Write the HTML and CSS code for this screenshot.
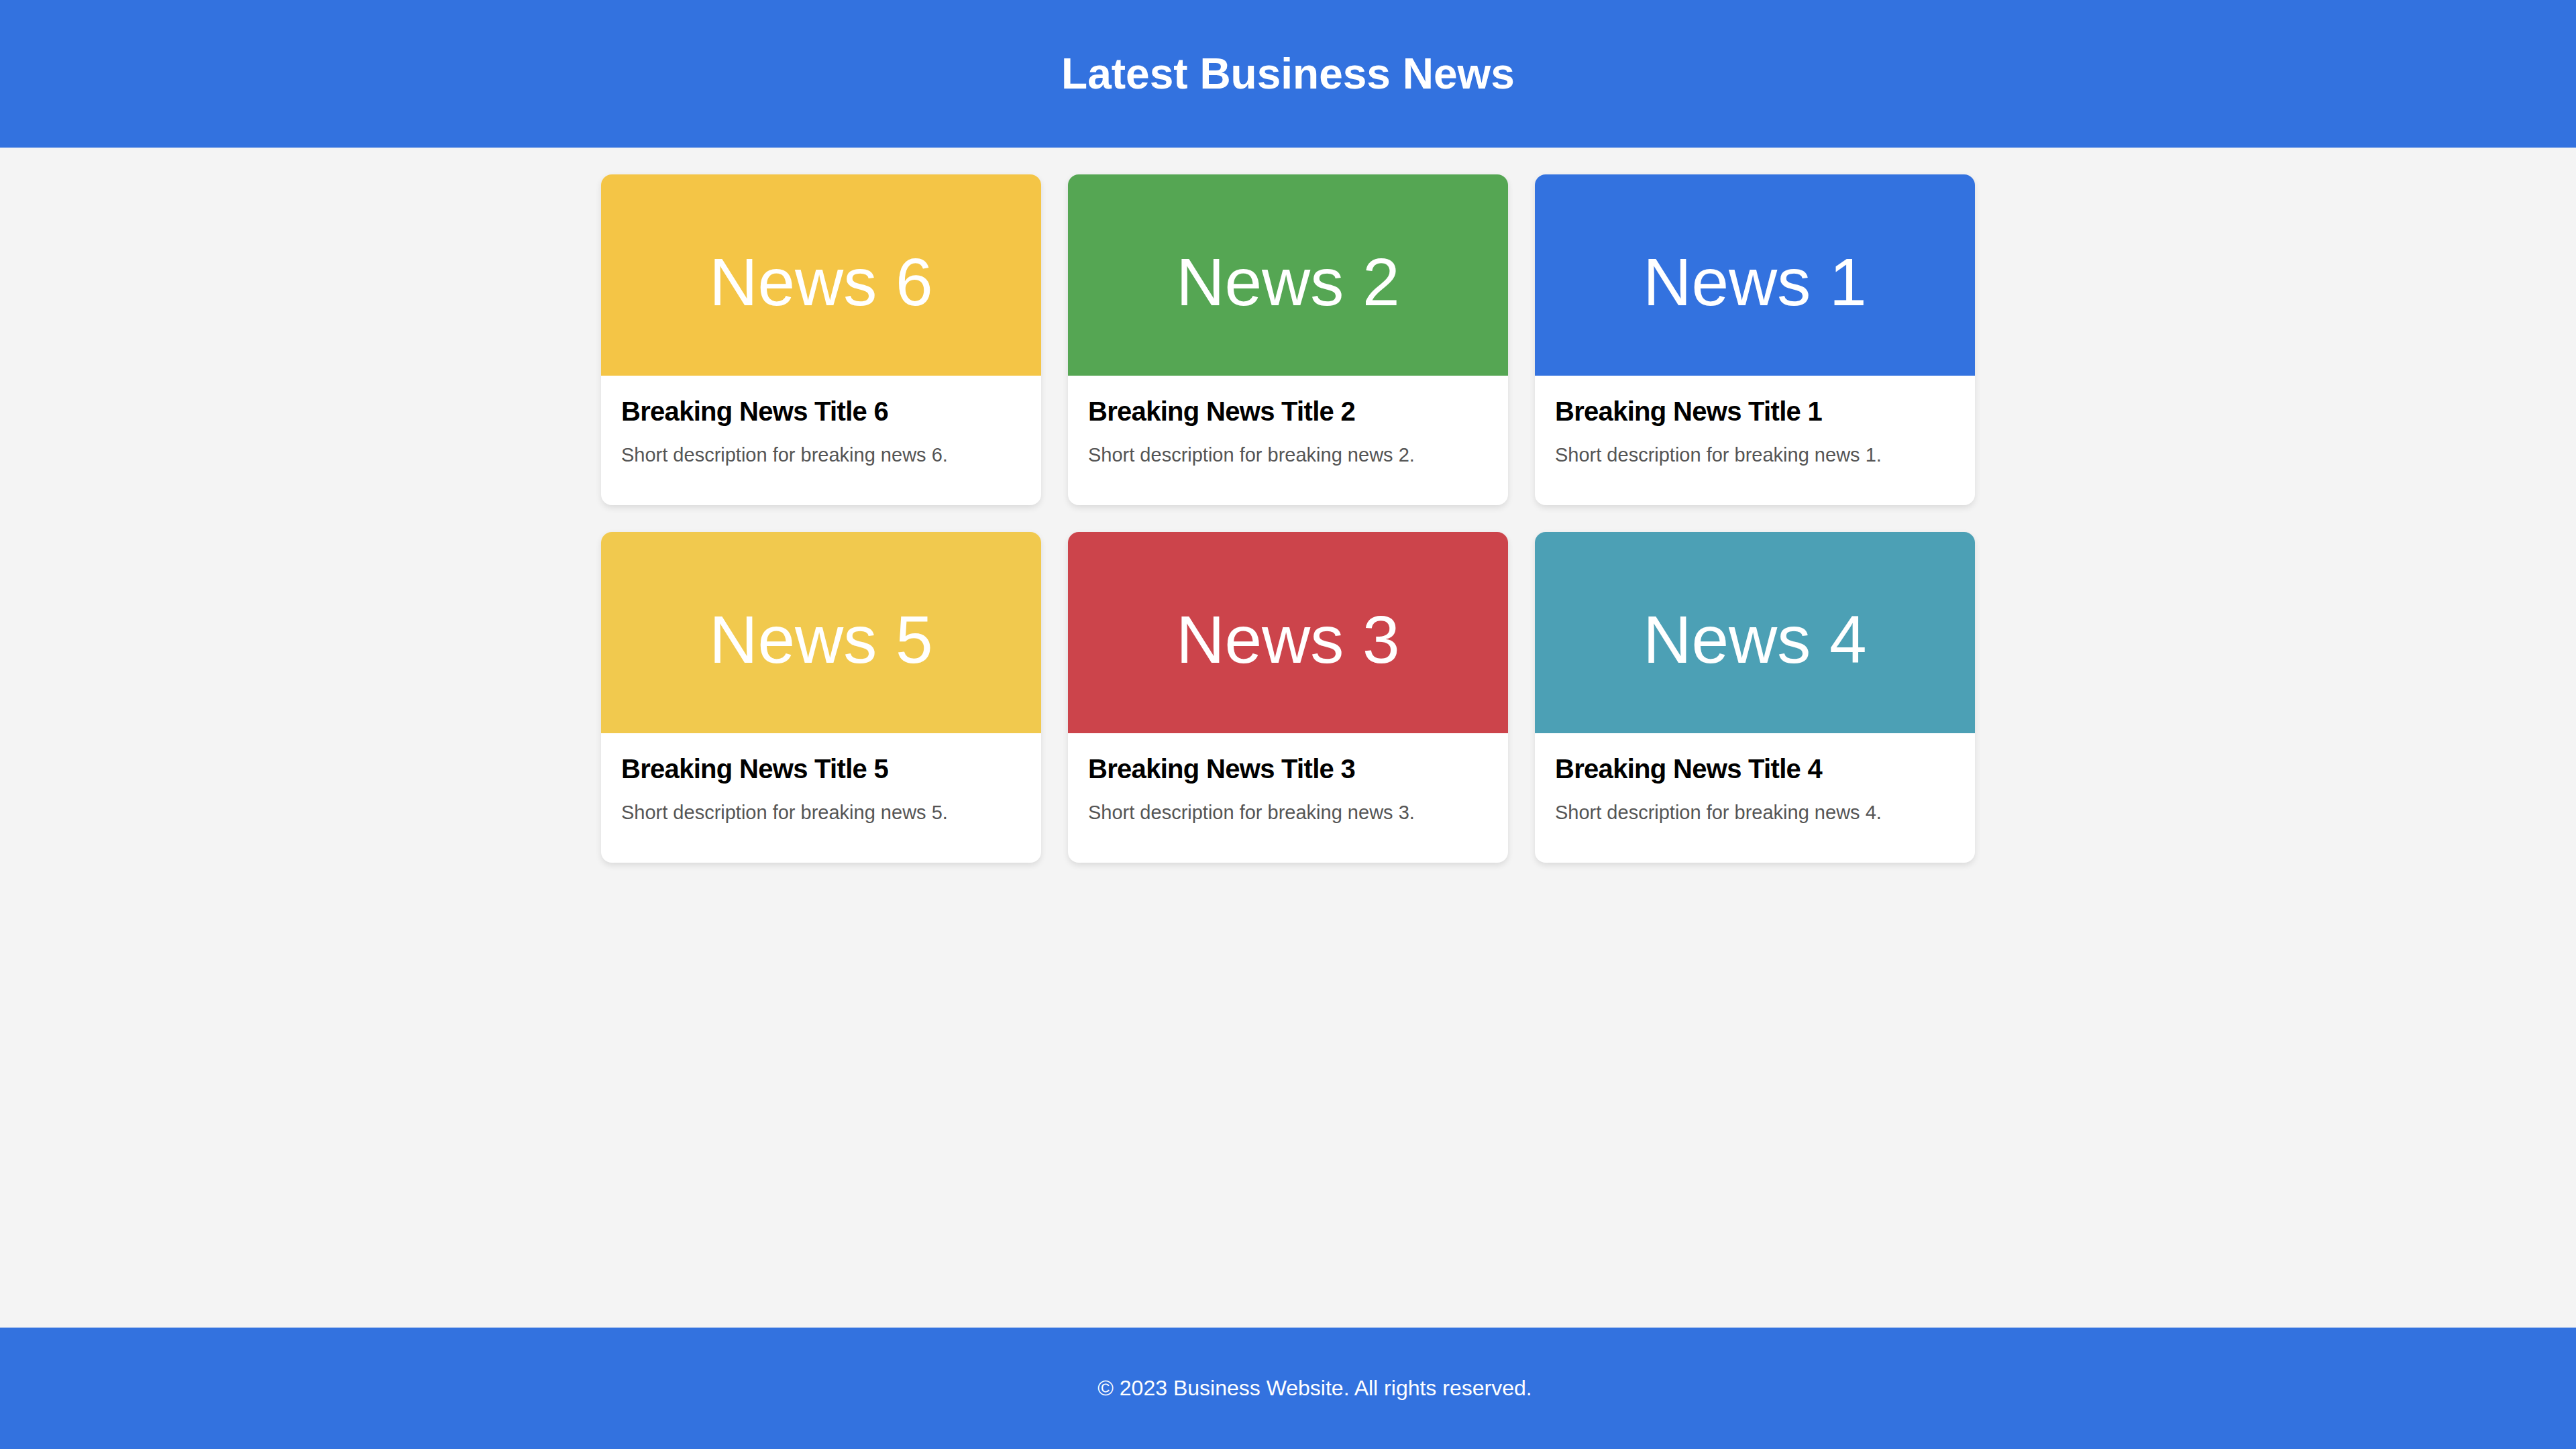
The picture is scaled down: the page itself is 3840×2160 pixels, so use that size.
FILE: index.html
```html
<!DOCTYPE html>
<html lang="en">
<head>
<meta charset="utf-8">
<title>Latest Business News</title>
<link rel="stylesheet" href="styles.css">
</head>
<body>
<div class="page">
  <header class="site-header">
    <h1>Latest Business News</h1>
  </header>
  <main class="news-grid">
    <article class="card">
      <div class="card-image yellow">News 6</div>
      <div class="card-body">
        <h3>Breaking News Title 6</h3>
        <p>Short description for breaking news 6.</p>
      </div>
    </article>
    <article class="card">
      <div class="card-image green">News 2</div>
      <div class="card-body">
        <h3>Breaking News Title 2</h3>
        <p>Short description for breaking news 2.</p>
      </div>
    </article>
    <article class="card">
      <div class="card-image blue">News 1</div>
      <div class="card-body">
        <h3>Breaking News Title 1</h3>
        <p>Short description for breaking news 1.</p>
      </div>
    </article>
    <article class="card">
      <div class="card-image gold">News 5</div>
      <div class="card-body">
        <h3>Breaking News Title 5</h3>
        <p>Short description for breaking news 5.</p>
      </div>
    </article>
    <article class="card">
      <div class="card-image red">News 3</div>
      <div class="card-body">
        <h3>Breaking News Title 3</h3>
        <p>Short description for breaking news 3.</p>
      </div>
    </article>
    <article class="card">
      <div class="card-image teal">News 4</div>
      <div class="card-body">
        <h3>Breaking News Title 4</h3>
        <p>Short description for breaking news 4.</p>
      </div>
    </article>
  </main>
  <footer class="site-footer">
    <p>&copy; 2023 Business Website. All rights reserved.</p>
  </footer>
</div>
</body>
</html>
```

FILE: styles.css
```css
html, body {
  margin: 0;
  padding: 0;
}

body {
  background: #f4f4f4;
  font-family: "Liberation Sans", Arial, sans-serif;
  color: #000;
}

.page {
  min-height: 100vh;
  display: flex;
  flex-direction: column;
}

.site-header {
  background: #3372df;
  color: #fff;
  text-align: center;
  padding: 30px 0;
}

.site-header h1 {
  margin: 42.88px 0;
  font-size: 64px;
  font-weight: bold;
  line-height: normal;
}

.news-grid {
  width: 2048px;
  margin: 0 auto;
  padding: 40px 0;
  display: grid;
  grid-template-columns: repeat(3, 656px);
  gap: 40px;
  align-content: start;
  flex: 1;
}

.card {
  background: #fff;
  border-radius: 16px;
  overflow: hidden;
  box-shadow: 0 4px 10px rgba(0, 0, 0, 0.1);
}

.card-image {
  height: 300px;
  box-sizing: border-box;
  padding-top: 22px;
  display: flex;
  align-items: center;
  justify-content: center;
  color: #fff;
  font-size: 100px;
  font-weight: normal;
}

.yellow { background: #f4c546; }
.green { background: #55a653; }
.blue { background: #3372df; }
.gold { background: #f1c94e; }
.red { background: #cc444b; }
.teal { background: #4ca0b5; }

.card-body {
  padding: 31px 30px 30px;
}

.card-body h3 {
  margin: 0 0 26px;
  font-size: 40px;
  font-weight: bold;
  line-height: normal;
  letter-spacing: -0.7px;
  color: #000;
}

.card-body p {
  margin: 0 0 28px;
  font-size: 29px;
  line-height: normal;
  color: #555;
}

.site-footer {
  background: #3372df;
  color: #fff;
  text-align: center;
  padding: 40px 0 40px 80px;
}

.site-footer p {
  margin: 32px 0;
  font-size: 32px;
  line-height: normal;
}
```
